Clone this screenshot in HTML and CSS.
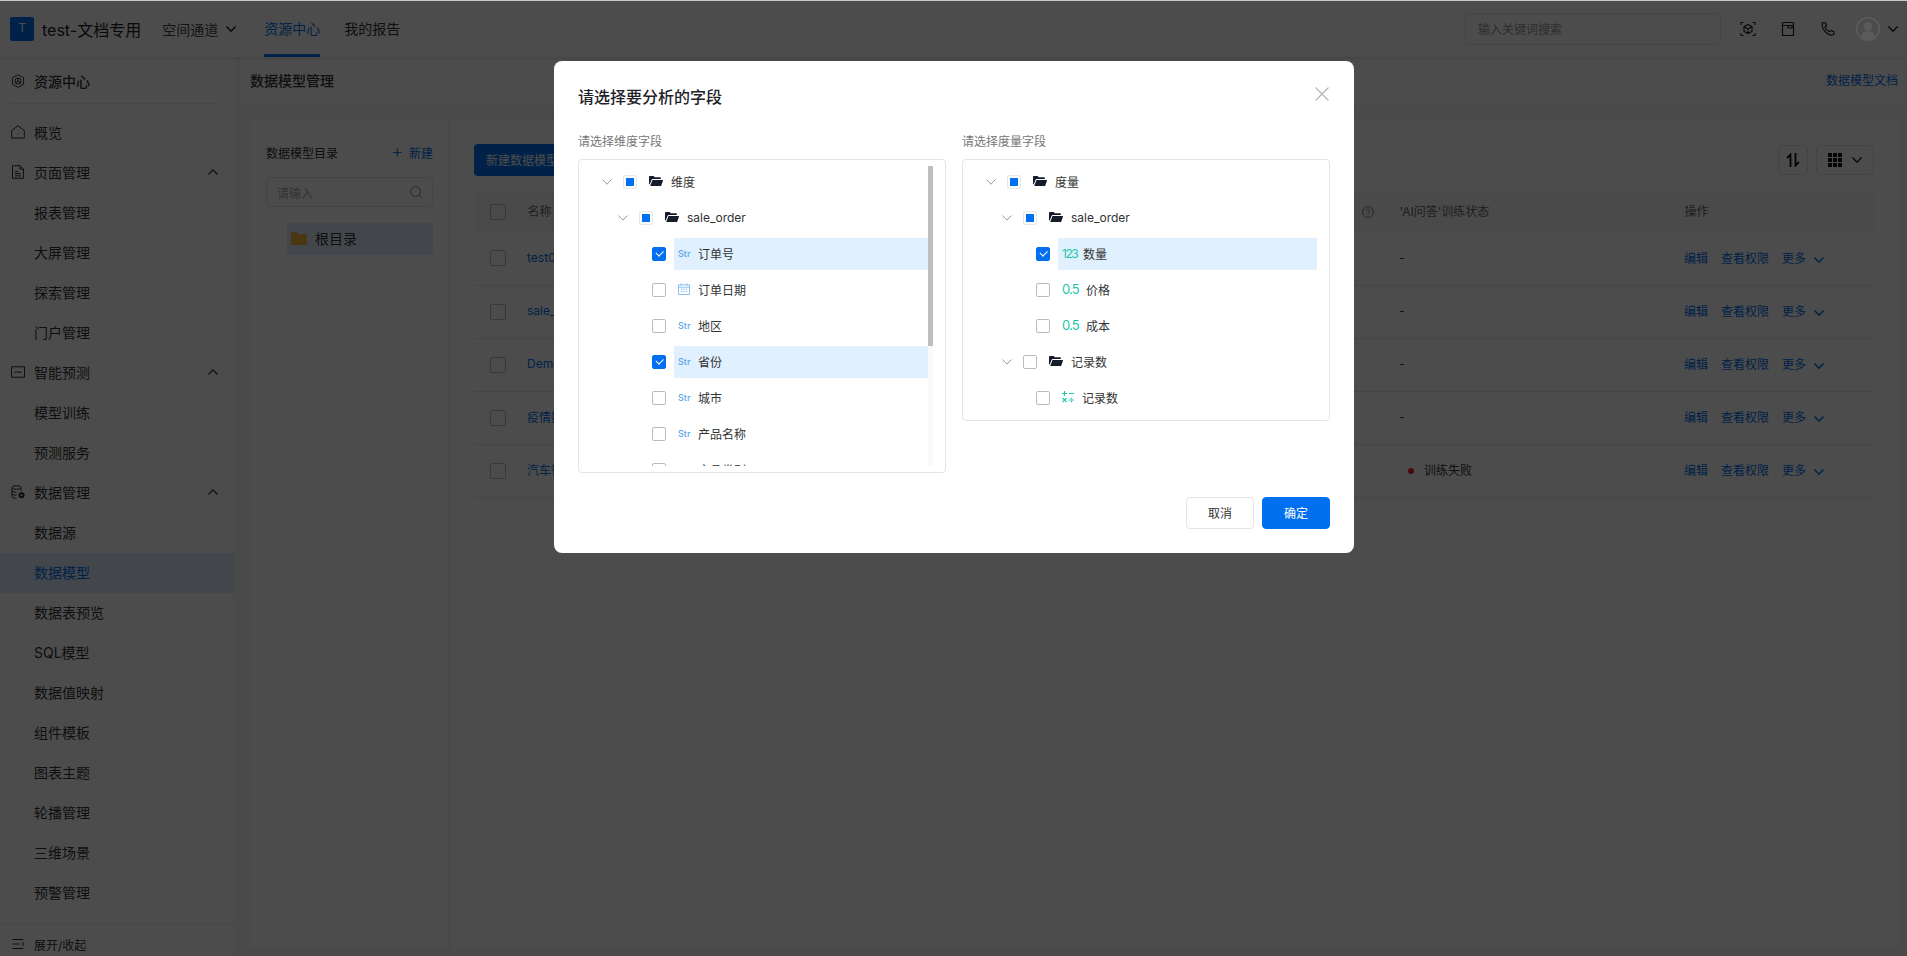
FILE: index.html
```html
<!DOCTYPE html>
<html lang="zh-CN">
<head>
    <meta charset="UTF-8">
    <title>数据模型管理</title>
    <link rel="stylesheet" href="styles.css">
</head>
<body>
    <svg class="defs" width="0" height="0">
        <symbol id="chev" viewBox="0 0 10 6"><path d="M.5.5 5 5.200 9.500.5" fill="none" stroke="currentColor"/></symbol>
        <symbol id="chev-up" viewBox="0 0 10 6"><path d="M.5 5.500 5 .8l4.500 4.700" fill="none" stroke="currentColor" stroke-width="1.100"/></symbol>
        <symbol id="folder" viewBox="0 0 14 10"><path d="M0 1C0 .4.400 0 1 0h3.600l1.200 1.300H11c.5 0 .8.300.8.800V3H3.600c-.5 0-.8.200-1 .7L.7 8.600 0 8zM3.500 3.900H13.500c.4 0 .6.300.5.700l-1.700 4.800c-.1.400-.4.600-.8.600H1.200z" fill="#141c2b"/></symbol>
    </svg>

    <div class="app">
        <header class="topbar">
            <span class="logo">T</span>
            <span class="brand">test-文档专用</span>
            <span class="space">空间通道 <svg class="chev"><use href="#chev"/></svg></span>
            <a class="tab active">资源中心</a>
            <a class="tab">我的报告</a>
            <div class="top-search">输入关键词搜索</div>
            <svg class="top-icon" viewBox="0 0 16 16" fill="none" stroke="#222" stroke-width="1.100"><path d="M1 4V1.500h2.500M12.500 1.500H15V4M15 12v2.500h-2.500M3.500 14.500H1V12"/><path d="m8 3.500 4 2.200v4.600l-4 2.200-4-2.200V5.700zM4 5.700l4 2.300 4-2.300M8 8v4.500"/></svg>
            <svg class="top-icon" viewBox="0 0 16 16" fill="none" stroke="#222" stroke-width="1.200"><path d="M2.500 4.500h11v10h-11zM2.500 1.500h11M2.500 4.500v-3M13.500 4.500v-3M8 4.500V7h4V4.500"/></svg>
            <svg class="top-icon" viewBox="0 0 16 16" fill="none" stroke="#222" stroke-width="1.200"><path d="M3 1.500 5.500 1.800l1 3-1.500 1.200c.6 1.800 2.500 4 4.500 4.800l1.300-1.400 3 1.200.2 2.500c-.3.600-1 1-2 1C6.500 14 2 8 2 3c0-.7.400-1.200 1-1.500z"/></svg>
            <svg class="avatar" viewBox="0 0 24 24"><circle cx="12" cy="12" r="11.300" fill="#4b4b4b" stroke="#5e5e5e" stroke-width="1.400"/><circle cx="12" cy="9.500" r="4.500" fill="#5a5a5a"/><path d="M4.500 20c1-4.500 4-6 7.500-6s6.500 1.500 7.500 6c-2 2.300-4.500 3.500-7.500 3.500S6.500 22.300 4.500 20z" fill="#5a5a5a"/></svg>
            <svg class="chev user-chev"><use href="#chev"/></svg>
        </header>

        <div class="body">
            <aside class="sidebar">
                <div class="side-head">
                    <svg class="side-icon" viewBox="0 0 14 14" fill="none" stroke="#333"><path d="m7 .7 5.600 3.100v6.400L7 13.300 1.400 10.200V3.800z"/><circle cx="7" cy="7" r="3"/><path d="M7 4v3l-2.500 2M7 7l2.500 2"/></svg>
                    资源中心
                </div>
                <nav class="side-nav">
                    <a class="side-item">
                        <svg class="side-icon" viewBox="0 0 14 14" fill="none" stroke="#333"><path d="M.7 13V5.500L7 .8l6.300 4.700V13zM6.500 9h1"/></svg>
                        概览
                    </a>
                    <a class="side-item">
                        <svg class="side-icon" viewBox="0 0 14 14" fill="none" stroke="#333"><path d="M1.500.7h7.500l3.500 3.500v9.100h-11zM9 .7v3.500h3.500M4 6.500h3M4 8.700h6M4 10.900h6"/></svg>
                        页面管理
                        <svg class="side-arrow"><use href="#chev-up"/></svg>
                    </a>
                    <a class="side-item sub">报表管理</a>
                    <a class="side-item sub">大屏管理</a>
                    <a class="side-item sub">探索管理</a>
                    <a class="side-item sub">门户管理</a>
                    <a class="side-item">
                        <svg class="side-icon" viewBox="0 0 14 14" fill="none" stroke="#333"><path d="M.5 1.800h13v10.400H.5zM3.500 7.300h2l1.200-1.300 1.300 2 1-.9h1.700"/></svg>
                        智能预测
                        <svg class="side-arrow"><use href="#chev-up"/></svg>
                    </a>
                    <a class="side-item sub">模型训练</a>
                    <a class="side-item sub">预测服务</a>
                    <a class="side-item">
                        <svg class="side-icon" viewBox="0 0 14 14" fill="none" stroke="#333"><ellipse cx="5.500" cy="2.500" rx="4.500" ry="1.800"/><path d="M1 2.500v9c0 1 1.800 1.800 4.500 1.800M1 5.500c0 1 1.800 1.800 4.500 1.800M1 8.500c0 1 1.800 1.800 4.500 1.800M10 2.500V6"/><circle cx="10.500" cy="10.200" r="2.700" fill="#333"/><circle cx="10.500" cy="10.200" r="1" fill="#fff" stroke="none"/></svg>
                        数据管理
                        <svg class="side-arrow"><use href="#chev-up"/></svg>
                    </a>
                    <a class="side-item sub">数据源</a>
                    <a class="side-item sub current">数据模型</a>
                    <a class="side-item sub">数据表预览</a>
                    <a class="side-item sub">SQL模型</a>
                    <a class="side-item sub">数据值映射</a>
                    <a class="side-item sub">组件模板</a>
                    <a class="side-item sub">图表主题</a>
                    <a class="side-item sub">轮播管理</a>
                    <a class="side-item sub">三维场景</a>
                    <a class="side-item sub">预警管理</a>
                </nav>
                <div class="side-foot">
                    <svg class="side-icon" viewBox="0 0 14 14" fill="none" stroke="#333"><path d="M1.500 2.500h11M1.500 7h7M1.500 11.500h11M13 5.500 11 7l2 1.500"/></svg>
                    展开/收起
                </div>
            </aside>

            <main class="main">
                <div class="page-head">
                    <span class="page-title">数据模型管理</span>
                    <a class="link">数据模型文档</a>
                </div>
                <div class="page-card">
                    <section class="dir">
                        <div class="dir-head">
                            <span>数据模型目录</span>
                            <a class="dir-new"><span class="plus">+</span>新建</a>
                        </div>
                        <div class="dir-search">
                            请输入
                            <svg viewBox="0 0 12 12" fill="none" stroke="#888"><circle cx="5.500" cy="5.500" r="4.800"/><path d="m9 9 2.500 2.500"/></svg>
                        </div>
                        <div class="dir-item">
                            <svg viewBox="0 0 16 14"><path d="M0 1h6l1.500 2H16v11H0z" fill="#f5bd39"/></svg>
                            根目录
                        </div>
                    </section>

                    <section class="list">
                        <div class="toolbar">
                            <button class="btn-new">新建数据模型</button>
                            <div class="tools">
                                <span class="tool">
                                    <svg viewBox="0 0 14 14" fill="none" stroke="#111" stroke-width="1.800"><path d="M4.500 14V1.500L1 5M9.500 0v12.500l3.500-3.500"/></svg>
                                </span>
                                <span class="tool tool-wide">
                                    <svg class="grid-icon" viewBox="0 0 14 14" fill="#111"><path d="M0 0h4v4H0zM5 0h4v4H5zM10 0h4v4h-4zM0 5h4v4H0zM5 5h4v4H5zM10 5h4v4h-4zM0 10h4v4H0zM5 10h4v4H5zM10 10h4v4h-4z"/></svg>
                                    <svg class="chev"><use href="#chev"/></svg>
                                </span>
                            </div>
                        </div>
                        <table class="models">
                            <colgroup>
                                <col class="c-check"><col class="c-name"><col class="c-help"><col class="c-state"><col class="c-ops">
                            </colgroup>
                            <thead>
                                <tr>
                                    <th><span class="box"></span></th>
                                    <th>名称</th>
                                    <th class="help-cell"><svg class="help" viewBox="0 0 12 12" fill="none" stroke="#777"><circle cx="6" cy="6" r="5.400"/><path d="M4.300 4.700C4.400 3.700 5.100 3.200 6 3.200s1.700.6 1.700 1.500c0 1.300-1.700 1.300-1.700 2.600M6 8.200v1"/></svg></th>
                                    <th>'AI问答'训练状态</th>
                                    <th>操作</th>
                                </tr>
                            </thead>
                            <tbody>
                                <tr>
                                    <td><span class="box"></span></td><td class="name">test01</td><td></td><td>-</td>
                                    <td class="ops"><a>编辑</a><a>查看权限</a><a>更多<svg class="chev"><use href="#chev"/></svg></a></td>
                                </tr>
                                <tr>
                                    <td><span class="box"></span></td><td class="name">sale_order</td><td></td><td>-</td>
                                    <td class="ops"><a>编辑</a><a>查看权限</a><a>更多<svg class="chev"><use href="#chev"/></svg></a></td>
                                </tr>
                                <tr>
                                    <td><span class="box"></span></td><td class="name">Demo</td><td></td><td>-</td>
                                    <td class="ops"><a>编辑</a><a>查看权限</a><a>更多<svg class="chev"><use href="#chev"/></svg></a></td>
                                </tr>
                                <tr>
                                    <td><span class="box"></span></td><td class="name">疫情数据</td><td></td><td>-</td>
                                    <td class="ops"><a>编辑</a><a>查看权限</a><a>更多<svg class="chev"><use href="#chev"/></svg></a></td>
                                </tr>
                                <tr>
                                    <td><span class="box"></span></td><td class="name">汽车销售</td><td></td><td class="failed"><i></i>训练失败</td>
                                    <td class="ops"><a>编辑</a><a>查看权限</a><a>更多<svg class="chev"><use href="#chev"/></svg></a></td>
                                </tr>
                            </tbody>
                        </table>
                    </section>
                </div>
            </main>
        </div>
    </div>

    <div class="mask">
        <div class="dialog">
            <div class="dialog-head">
                <h2>请选择要分析的字段</h2>
                <svg class="close" viewBox="0 0 14 14" fill="none" stroke="#b4b4b4" stroke-width="1.200"><path d="m.5.5 13 13M13.500.5l-13 13"/></svg>
            </div>
            <div class="pickers">
                <div class="picker">
                    <div class="picker-label">请选择维度字段</div>
                    <div class="tree-box">
                        <div class="tree-scroll">
                            <div class="node lv0"><svg class="switcher"><use href="#chev"/></svg><span class="check half"></span><div class="node-body"><svg class="ico-folder"><use href="#folder"/></svg>维度</div></div>
                            <div class="node lv1"><svg class="switcher"><use href="#chev"/></svg><span class="check half"></span><div class="node-body"><svg class="ico-folder"><use href="#folder"/></svg>sale_order</div></div>
                            <div class="node leaf"><span class="check on"></span><div class="node-body picked"><span class="ico-str">Str</span>订单号</div></div>
                            <div class="node leaf"><span class="check"></span><div class="node-body"><svg class="ico-date" viewBox="0 0 12 12" fill="none" stroke="#8cc0ee"><path d="M.5 1.800h11v9.700H.5zM.5 4.200h11M3 .3v2.500M9 .3v2.500M3 6.200h1.500M5.300 6.200h1.500M7.700 6.200h1.500M3 8.500h1.500M5.300 8.500h1.500M7.700 8.500h1.500"/></svg>订单日期</div></div>
                            <div class="node leaf"><span class="check"></span><div class="node-body"><span class="ico-str">Str</span>地区</div></div>
                            <div class="node leaf"><span class="check on"></span><div class="node-body picked"><span class="ico-str">Str</span>省份</div></div>
                            <div class="node leaf"><span class="check"></span><div class="node-body"><span class="ico-str">Str</span>城市</div></div>
                            <div class="node leaf"><span class="check"></span><div class="node-body"><span class="ico-str">Str</span>产品名称</div></div>
                            <div class="node leaf"><span class="check"></span><div class="node-body"><span class="ico-str">Str</span>产品类别</div></div>
                        </div>
                        <div class="scrollbar"><div class="thumb"></div></div>
                    </div>
                </div>
                <div class="picker">
                    <div class="picker-label">请选择度量字段</div>
                    <div class="tree-box">
                        <div class="tree-scroll">
                            <div class="node lv0"><svg class="switcher"><use href="#chev"/></svg><span class="check half"></span><div class="node-body"><svg class="ico-folder"><use href="#folder"/></svg>度量</div></div>
                            <div class="node lv1"><svg class="switcher"><use href="#chev"/></svg><span class="check half"></span><div class="node-body"><svg class="ico-folder"><use href="#folder"/></svg>sale_order</div></div>
                            <div class="node leaf"><span class="check on"></span><div class="node-body picked"><span class="ico-int">123</span>数量</div></div>
                            <div class="node leaf"><span class="check"></span><div class="node-body"><span class="ico-float">0.5</span>价格</div></div>
                            <div class="node leaf"><span class="check"></span><div class="node-body"><span class="ico-float">0.5</span>成本</div></div>
                            <div class="node lv1"><svg class="switcher"><use href="#chev"/></svg><span class="check"></span><div class="node-body"><svg class="ico-folder"><use href="#folder"/></svg>记录数</div></div>
                            <div class="node leaf"><span class="check"></span><div class="node-body"><svg class="ico-calc" viewBox="0 0 12 12" fill="none" stroke="#1cc6a6" stroke-width="1.100"><path d="M0 2.500h5M2.500 0v5M7 2.500h5M.5 7l4 4M4.500 7l-4 4M7 9h5M9.500 6.800v1.200M9.500 10v1.200"/></svg>记录数</div></div>
                        </div>
                    </div>
                </div>
            </div>
            <div class="dialog-foot">
                <button class="btn">取消</button>
                <button class="btn primary">确定</button>
            </div>
        </div>
    </div>
</body>
</html>
```

FILE: styles.css
```css
* {
    box-sizing: border-box;
}
html, body {
    height: 100%;
}
body {
    margin: 0;
    overflow: hidden;
    font-family: Inter, "Noto Sans CJK SC", sans-serif;
    font-size: 12px;
    color: #333;
    background: #f7f8f9;
}
a {
    color: inherit;
    text-decoration: none;
}
.defs {
    position: absolute;
}
.chev {
    width: 10px;
    height: 6px;
    flex: none;
    stroke-width: 1;
}

/* top bar */
.app {
    height: 956px;
    display: flex;
    flex-direction: column;
    border-top: 1px solid #d0d0d0;
}
.topbar {
    height: 56px;
    flex: none;
    display: flex;
    align-items: center;
    padding: 0 9px 0 10px;
    background: #fff;
    box-shadow: 0 1px 4px rgba(0,0,0,0.15);
    position: relative;
}
.logo {
    width: 24px;
    height: 24px;
    border-radius: 2px;
    background: #0070f0;
    color: #fff;
    text-align: center;
    line-height: 22px;
    font-size: 12px;
}
.brand {
    margin-left: 8px;
    font-size: 16px;
    color: #222;
}
.space {
    margin-left: 21px;
    font-size: 14px;
    color: #444;
    width: 102px;
    display: flex;
    align-items: center;
    gap: 8px;
}
.space .chev, .user-chev {
    color: #111;
    stroke-width: 1.300;
}
.tab {
    height: 56px;
    line-height: 56px;
    font-size: 14px;
    margin-right: 24px;
}
.tab.active {
    color: #0070f0;
    border-bottom: 3px solid #0070f0;
}
.top-search {
    margin-left: auto;
    margin-right: 19px;
    width: 256px;
    height: 32px;
    line-height: 31px;
    padding-left: 12px;
    border: 1px solid #e5e5e5;
    border-radius: 4px;
    color: #999;
}
.top-icon {
    width: 16px;
    height: 16px;
    margin-right: 24px;
}
/* the reference's avatar stays lighter than the dimmed page, so it sits above the mask */
.avatar {
    position: relative;
    z-index: 2;
    width: 24px;
    height: 24px;
    margin-left: -4px;
}
.user-chev {
    margin-left: 8px;
}

.body {
    flex: 1;
    min-height: 0;
    display: flex;
}

/* sidebar */
.sidebar {
    width: 234px;
    flex: none;
    display: flex;
    flex-direction: column;
    background: #fff;
    font-size: 14px;
}
.side-head {
    height: 42px;
    margin: 5px 16px 0 10px;
    padding: 0 0 4px 1px;
    display: flex;
    align-items: center;
    gap: 9px;
    border-bottom: 1px solid #ececec;
    font-weight: 500;
}
.side-nav {
    flex: 1;
    margin-top: 9px;
}
.side-item {
    height: 40px;
    display: flex;
    align-items: center;
    gap: 9px;
    padding: 0 16px 2px 11px;
}
.side-item.sub {
    padding-left: 34px;
}
.side-item.current {
    background: #e1effd;
    color: #0070f0;
}
.side-icon {
    width: 14px;
    height: 14px;
    flex: none;
}
.side-arrow {
    width: 10px;
    height: 6px;
    margin-left: auto;
}
.side-foot {
    height: 32px;
    padding: 7px 0 0 11px;
    display: flex;
    align-items: center;
    gap: 9px;
    border-top: 1px solid #ececec;
    font-size: 12px;
}

/* main */
.main {
    flex: 1;
    min-width: 0;
    display: flex;
    flex-direction: column;
}
.page-head {
    height: 48px;
    flex: none;
    margin-left: 7px;
    padding: 0 9px 3px;
    display: flex;
    align-items: center;
    justify-content: space-between;
    background: #fff;
}
.page-title {
    font-size: 14px;
    font-weight: 500;
}
.link {
    color: #0070f0;
}
.page-card {
    flex: 1;
    margin: 15px 9px 8px 16px;
    display: flex;
    background: #fff;
}

/* model directory */
.dir {
    width: 200px;
    flex: none;
    padding: 22px 16px 0;
    border-right: 1px solid #e5e5e5;
}
.dir-head {
    height: 22px;
    padding-bottom: 2px;
    display: flex;
    justify-content: space-between;
    align-items: center;
}
.dir-new {
    color: #0070f0;
    display: flex;
    align-items: center;
}
.plus {
    font-size: 18px;
    font-weight: 300;
    line-height: 1;
    margin-right: 6px;
}
.dir-search {
    margin-top: 13px;
    height: 30px;
    padding: 0 10px;
    display: flex;
    align-items: center;
    justify-content: space-between;
    border: 1px solid #e5e5e5;
    border-radius: 4px;
    color: #aaa;
}
.dir-search svg {
    width: 12px;
    height: 12px;
}
.dir-item {
    margin: 16px 0 0 21px;
    height: 32px;
    padding: 0 0 2px 4px;
    display: flex;
    align-items: center;
    gap: 8px;
    background: #e1effd;
    font-size: 14px;
}
.dir-item svg {
    width: 16px;
    height: 14px;
}

/* model list */
.list {
    flex: 1;
    min-width: 0;
    padding: 24px 24px 0;
}
.toolbar {
    display: flex;
    justify-content: space-between;
    align-items: center;
}
.btn-new {
    height: 32px;
    width: 96px;
    padding: 0 0 2px;
    border: 0;
    border-radius: 4px;
    background: #0070f0;
    color: #fff;
    font: inherit;
}
.tools {
    display: flex;
    gap: 8px;
}
.tool {
    width: 30px;
    height: 30px;
    display: flex;
    align-items: center;
    justify-content: center;
    border: 1px solid #e5e5e5;
    border-radius: 4px;
}
.tool svg {
    width: 14px;
    height: 14px;
}
.tool-wide {
    width: 58px;
    gap: 10px;
}
.tool .chev {
    width: 10px;
    height: 6px;
    color: #111;
    stroke-width: 1.300;
}
.models {
    margin-top: 16px;
    width: 100%;
    border-collapse: collapse;
    table-layout: fixed;
}
.c-check {
    width: 43px;
}
.c-help {
    width: 388px;
}
.c-state {
    width: 286px;
}
.c-ops {
    width: 200px;
}
.models th {
    height: 40px;
    padding: 0 10px 3px;
    text-align: left;
    font-weight: 400;
    color: #666;
    background: #f8f9fa;
    border-left: 1px solid #f0f0f0;
}
.models th:first-child {
    padding: 0 0 0 16px;
    border-left: 0;
}
.models td {
    height: 53px;
    padding: 0 10px 2px;
    border-bottom: 1px solid #e8e8e8;
}
.models td:first-child {
    padding: 0 0 0 16px;
}
.models th:nth-child(4), .models td:nth-child(4) {
    padding-left: 11px;
}
.box {
    display: block;
    width: 16px;
    height: 16px;
    border: 1px solid #bbb;
    border-radius: 2px;
}
.help-cell {
    text-align: right !important;
}
.help {
    width: 12px;
    height: 12px;
    vertical-align: middle;
    margin-right: 4px;
}
.name {
    color: #0070f0;
    white-space: nowrap;
}
.failed i {
    display: inline-block;
    width: 6px;
    height: 6px;
    margin: 0 10px 1px 9px;
    border-radius: 50%;
    background: #f5222d;
}
.ops {
    color: #0070f0;
}
.ops a {
    margin-right: 13px;
}
.ops .chev {
    margin-left: 8px;
    stroke-width: 1.500;
}

/* dialog */
.mask {
    position: fixed;
    top: 1px;
    left: 0;
    right: 0;
    bottom: 0;
    background: rgba(0,0,0,0.7);
}
.dialog {
    width: 800px;
    height: 492px;
    margin: 60px 0 0 554px;
    padding: 0 24px 24px;
    display: flex;
    flex-direction: column;
    background: #fff;
    border-radius: 8px;
}
.dialog-head {
    height: 72px;
    flex: none;
    padding-bottom: 2px;
    display: flex;
    align-items: center;
    justify-content: space-between;
}
.dialog-head h2 {
    margin: 0;
    font-size: 16px;
    font-weight: 500;
    color: #1f2329;
}
.close {
    width: 14px;
    height: 14px;
    margin: 0 1px 4px 0;
}
.pickers {
    display: grid;
    grid-template-columns: 1fr 1fr;
    gap: 16px;
    align-items: start;
}
.picker-label {
    height: 18px;
    line-height: 18px;
    margin-bottom: 8px;
    color: #777;
}
.tree-box {
    position: relative;
    border: 1px solid #e5e5e5;
    border-radius: 4px;
    padding: 6px 12px 6px;
}
.tree-scroll {
    max-height: 300px;
    overflow: hidden;
}
.picker:first-child .tree-scroll {
    padding-right: 5px;
}
.scrollbar {
    position: absolute;
    top: 6px;
    right: 12px;
    width: 5px;
    height: 300px;
    background: #fafafa;
}
.thumb {
    height: 180px;
    background: #bebebe;
}
.node {
    height: 32px;
    margin-bottom: 4px;
    display: flex;
    align-items: center;
    color: #333;
}
.node:last-child {
    margin-bottom: 0;
}
.lv0 {
    padding-left: 4px;
}
.lv1 {
    padding-left: 20px;
}
.leaf {
    padding-left: 61px;
}
.switcher {
    width: 24px;
    height: 6px;
    color: #999;
    flex: none;
    margin-right: 4px;
    stroke-width: 1;
}
.check {
    position: relative;
    width: 14px;
    height: 14px;
    flex: none;
    margin-right: 8px;
    border: 1px solid #bbb;
    border-radius: 2px;
    background: #fff;
}
.check.half {
    border-color: #e8e8e8;
}
.check.half::after {
    content: "";
    position: absolute;
    left: 2px;
    top: 2px;
    width: 8px;
    height: 8px;
    background: #0070f0;
}
.check.on {
    border-color: #0070f0;
    background: #0070f0;
}
.check.on::after {
    content: "";
    position: absolute;
    left: 3px;
    top: 2px;
    width: 6px;
    height: 3.500px;
    border-left: 1.200px solid #fff;
    border-bottom: 1.200px solid #fff;
    transform: rotate(-45deg);
}
.node-body {
    flex: 1;
    height: 32px;
    padding: 0 0 2px 4px;
    display: flex;
    align-items: center;
    gap: 8px;
    min-width: 0;
}
.node-body.picked {
    background: #e1f0fe;
}
.ico-folder {
    width: 14px;
    height: 10px;
    flex: none;
}
.ico-str {
    width: 12px;
    font-size: 9px;
    font-weight: 500;
    color: #5aa6e8;
    white-space: nowrap;
}
.ico-date {
    width: 12px;
    height: 12px;
}
.ico-int {
    width: 13px;
    font-size: 12px;
    letter-spacing: -1.500px;
    color: #1cc6a6;
}
.ico-float {
    width: 16px;
    font-size: 13px;
    letter-spacing: -0.800px;
    color: #1cc6a6;
}
.ico-calc {
    width: 12px;
    height: 12px;
}
.dialog-foot {
    margin-top: auto;
    display: flex;
    justify-content: flex-end;
    gap: 8px;
}
.btn {
    width: 68px;
    height: 32px;
    padding: 0 0 2px;
    border: 1px solid #e5e5e5;
    border-radius: 4px;
    background: #fff;
    color: #333;
    font: inherit;
}
.btn.primary {
    border-color: #0070f0;
    background: #0070f0;
    color: #fff;
}
```
